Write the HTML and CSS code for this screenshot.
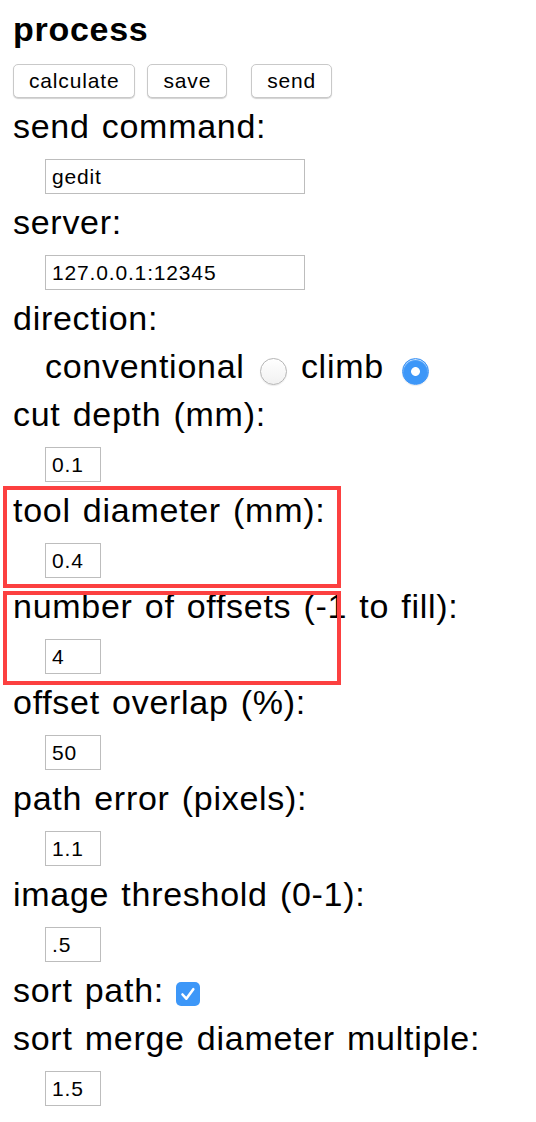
FILE: index.html
```html
<!DOCTYPE html>
<html lang="en">
<head>
    <meta charset="UTF-8">
    <meta content="width=device-width" name="viewport">
    <title>process</title>
    <link rel="stylesheet" href="styles.css">
</head>
<body>
    <div class="panel">
        <h1 class="title">process</h1>
        <div class="actions">
            <button class="btn">calculate</button>
            <button class="btn">save</button>
            <button class="btn wide-gap">send</button>
        </div>

        <div class="field">
            <p class="label">send command:</p>
            <p class="value"><input class="text long" type="text" value="gedit"></p>
        </div>
        <div class="field">
            <p class="label">server:</p>
            <p class="value"><input class="text long" type="text" value="127.0.0.1:12345"></p>
        </div>
        <div class="field">
            <p class="label">direction:</p>
            <p class="label choice">
                conventional <span class="radio"></span>
                climb <span class="radio on"></span>
            </p>
        </div>
        <div class="field">
            <p class="label">cut depth (mm):</p>
            <p class="value"><input class="text" type="text" value="0.1"></p>
        </div>
        <div class="field marked first">
            <p class="label">tool diameter (mm):</p>
            <p class="value"><input class="text" type="text" value="0.4"></p>
        </div>
        <div class="field marked second">
            <p class="label">number of offsets (-1 to fill):</p>
            <p class="value"><input class="text" type="text" value="4"></p>
        </div>
        <div class="field">
            <p class="label">offset overlap (%):</p>
            <p class="value"><input class="text" type="text" value="50"></p>
        </div>
        <div class="field">
            <p class="label">path error (pixels):</p>
            <p class="value"><input class="text" type="text" value="1.1"></p>
        </div>
        <div class="field">
            <p class="label">image threshold (0-1):</p>
            <p class="value"><input class="text" type="text" value=".5"></p>
        </div>
        <div class="field">
            <p class="label">sort path: <span class="check"><svg width="24" height="24" viewBox="0 0 24 24"><path d="M6.5 12.5l3.8 4.2 7-9.5" fill="none" stroke="#fff" stroke-width="2.6" stroke-linecap="round" stroke-linejoin="round"/></svg></span></p>
        </div>
        <div class="field">
            <p class="label">sort merge diameter multiple:</p>
            <p class="value"><input class="text" type="text" value="1.5"></p>
        </div>
        <div class="field">
            <p class="label">sort order weight:</p>
            <p class="value"><input class="text" type="text" value="-1"></p>
        </div>
    </div>
</body>
</html>
```

FILE: styles.css
```css
* {
    margin: 0;
    padding: 0;
    box-sizing: border-box;
}
body {
    background-color: #fff;
    color: #000;
    font-family: "Liberation Sans", Arial, sans-serif;
    letter-spacing: 0.045em;
    word-spacing: 2px;
}
.panel {
    padding: 5px 13px 0;
}

.title {
    font-size: 34px;
    font-weight: bold;
    line-height: 48px;
}

.actions {
    display: flex;
    margin: 11px 0 4px;
    height: 34px;
}
.btn {
    height: 34px;
    padding: 0 15px;
    margin-right: 12px;
    font-family: inherit;
    font-size: 21px;
    letter-spacing: 0.04em;
    color: #000;
    background-color: #fff;
    border: 1px solid #c9c9c9;
    border-radius: 5px;
    box-shadow: 0 1px 1px rgba(0, 0, 0, .18);
}
.btn.wide-gap {
    margin-left: 12px;
}

.label {
    font-size: 34px;
    line-height: 48px;
    white-space: nowrap;
}
.label.choice {
    padding-left: 32px;
}
.value {
    padding: 9px 0 4px 32px;
    line-height: 0;
}

.text {
    width: 56px;
    height: 35px;
    padding: 0 6px;
    font-family: inherit;
    font-size: 21px;
    letter-spacing: 0.04em;
    color: #000;
    border: 1px solid #bdbdbd;
    background-color: #fff;
    outline: none;
}
.text.long {
    width: 260px;
}

.radio {
    display: inline-block;
    vertical-align: middle;
    width: 27px;
    height: 27px;
    margin: 4px 2px 0 3px;
    border-radius: 50%;
    border: 1px solid #b5b5b5;
    background: linear-gradient(#fff, #f1f1f1);
    box-shadow: inset 0 1px 1px rgba(255, 255, 255, .8), 0 1px 1px rgba(0, 0, 0, .08);
}
.radio.on {
    margin-left: 6px;
    border-color: #3e95f6;
    background: radial-gradient(circle, #fff 0 4px, #3d97f8 4.8px);
}

.check {
    display: inline-block;
    vertical-align: middle;
    width: 24px;
    height: 24px;
    margin: 2px 0 0;
    border-radius: 5px;
    background-color: #3d97f8;
    line-height: 0;
}

.marked {
    position: relative;
}
.marked:after {
    content: "";
    position: absolute;
    left: -10px;
    width: 338px;
    border: 4px solid #fc4040;
    box-sizing: border-box;
}
.marked.first:after {
    top: 0;
    bottom: -6px;
}
.marked.second:after {
    top: 9px;
    bottom: -7px;
}
```
